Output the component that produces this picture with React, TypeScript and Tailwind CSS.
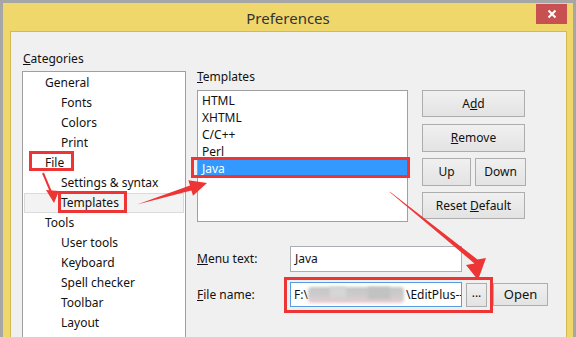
import React from 'react';

const tree = [
  { label: 'General', level: 0 },
  { label: 'Fonts', level: 1 },
  { label: 'Colors', level: 1 },
  { label: 'Print', level: 1 },
  { label: 'File', level: 0 },
  { label: 'Settings & syntax', level: 1 },
  { label: 'Templates', level: 1, selected: true },
  { label: 'Tools', level: 0 },
  { label: 'User tools', level: 1 },
  { label: 'Keyboard', level: 1 },
  { label: 'Spell checker', level: 1 },
  { label: 'Toolbar', level: 1 },
  { label: 'Layout', level: 1 },
];

const templates = ['HTML', 'XHTML', 'C/C++', 'Perl', 'Java'];

const btn =
  'flex items-center justify-center border border-[#adadad] bg-gradient-to-b from-[#f0f0f0] to-[#e3e3e3] text-[#111]';

const Annotations: React.FC = () => (
  <svg
    className="absolute left-0 top-0 pointer-events-none"
    width={576}
    height={337}
    viewBox="0 0 576 337"
  >
    <g fill="none" stroke="#ee3535" strokeWidth={3}>
      <rect x={30.5} y={152.5} width={42} height={17} />
      <rect x={59.5} y={192.5} width={66} height={19} />
      <rect x={192.5} y={158.5} width={216} height={18} />
      <rect x={285.5} y={278.5} width={206} height={33} />
    </g>
    <g fill="#ee3535">
      {/* File -> Templates */}
      <line x1={43} y1={173} x2={51} y2={192} stroke="#ee3535" strokeWidth={2} />
      <polygon points="46,190 59,191 54,203" />
      {/* Templates -> Java */}
      <polygon points="137,204.5 190,185.6 188.4,180.3 207,183 193,195.7 191.4,190.4" />
      {/* Java -> browse button */}
      <polygon points="389,191.5 391,192.5 477.5,259.5 486,258 478,280 466,265 474.5,263.5" />
    </g>
  </svg>
);

const App: React.FC = () => {
  return (
    <div className="relative w-[576px] h-[337px] overflow-hidden bg-[#a6a6a6] pt-[3px] px-[3px] font-['Noto_Sans','Liberation_Sans',sans-serif] text-[12px] text-[#111]">
      <div className="h-[400px] bg-[#efd76c] flex flex-col">
        {/* title bar */}
        <div className="relative h-[30px] flex items-center justify-center pt-[3px]">
          <span className="text-[15px] text-[#333]">Preferences</span>
          <div className="absolute right-[6px] top-[1px] w-[31px] h-[20px] bg-[#c75050] flex items-center justify-center">
            <svg width="10" height="10" viewBox="0 0 10 10">
              <path d="M1.5 1.5 L8.5 8.5 M8.5 1.5 L1.5 8.5" stroke="#fff" strokeWidth="2" />
            </svg>
          </div>
        </div>

        {/* panel */}
        <div className="ml-[7px] mr-[6px] h-[400px] border border-[#d2b955] bg-[#f0f0f0] flex pl-[11px]">
          {/* categories */}
          <div className="w-[164px] pt-[19px] shrink-0">
            <div className="h-[16px] leading-[16px] mb-[4px] pl-[1px]">
              <span className="underline">C</span>ategories
            </div>
            <div className="h-[300px] border border-[#a0a0a0] bg-white pt-[1px]">
              {tree.map((t) =>
                t.selected ? (
                  <div
                    key={t.label}
                    className="mx-[1px] h-[20px] leading-[18px] border border-[#dadada] bg-[#f3f3f3] pl-[36px]"
                  >
                    {t.label}
                  </div>
                ) : (
                  <div
                    key={t.label}
                    className={`h-[20px] leading-[20px] ${t.level === 0 ? 'pl-[22px]' : 'pl-[38px]'}`}
                  >
                    {t.label}
                  </div>
                )
              )}
            </div>
          </div>

          {/* right side */}
          <div className="ml-[11px] pt-[37px]">
            <div className="h-[16px] leading-[16px]">
              <span className="underline">T</span>emplates
            </div>
            <div className="flex mt-[5px]">
              <div className="w-[211px] h-[132px] border border-[#a0a0a0] bg-white pt-[1px]">
                {templates.map((t) => (
                  <div
                    key={t}
                    className={`h-[17px] leading-[17px] pl-[4px] ${t === 'Java' ? 'bg-[#3399ff] text-white' : ''}`}
                  >
                    {t}
                  </div>
                ))}
              </div>
              <div className="ml-[14px] flex flex-col">
                <div className={`${btn} w-[103px] h-[27px]`}>
                  A<span className="underline">d</span>d
                </div>
                <div className={`${btn} w-[103px] h-[28px] mt-[7px]`}>
                  <span className="underline">R</span>emove
                </div>
                <div className="flex mt-[6px]">
                  <div className={`${btn} w-[49px] h-[28px]`}>Up</div>
                  <div className={`${btn} w-[51px] h-[28px] ml-[4px]`}>Down</div>
                </div>
                <div className={`${btn} w-[103px] h-[27px] mt-[6px]`}>
                  Reset&nbsp;<span className="underline">D</span>efault
                </div>
              </div>
            </div>

            <div className="flex items-center mt-[24px]">
              <div className="w-[93px]">
                <span className="underline">M</span>enu text:
              </div>
              <div className="w-[172px] h-[26px] border border-[#abadb3] bg-white pl-[4px] leading-[24px]">
                Java
              </div>
            </div>

            <div className="flex items-center mt-[10px]">
              <div className="w-[93px]">
                <span className="underline">F</span>ile name:
              </div>
              <div className="w-[172px] h-[25px] border border-[#569de5] bg-white pl-[3px] flex items-center overflow-hidden whitespace-nowrap">
                <span>F:\</span>
                <span className="relative inline-block w-[98px] h-[18px] shrink-0">
                  <span className="absolute left-[0px] top-[1px] w-[96px] h-[16px] rounded-[4px] blur-[1.5px] bg-gradient-to-b from-[#c6c6c6] via-[#cbcbcb] to-[#e8cdd2]" />
                  <span className="absolute left-[22px] top-[1px] w-[16px] h-[11px] blur-[1.5px] bg-[#d6d6d6]" />
                  <span className="absolute left-[60px] top-[1px] w-[22px] h-[12px] blur-[1.5px] bg-[#c2c2c2]" />
                </span>
                <span>\EditPlus--</span>
              </div>
              <div className={`${btn} w-[21px] h-[24px] ml-[4px] pb-[3px]`}>...</div>
              <div className={`${btn} w-[55px] h-[23px] ml-[6px] text-[13px]`}>Open</div>
            </div>
          </div>
        </div>
      </div>
      <Annotations />
    </div>
  );
};

export default App;
